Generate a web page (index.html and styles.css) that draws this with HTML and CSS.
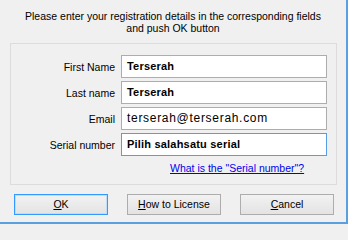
FILE: index.html
```html
<!DOCTYPE html>
<html>
<head>
<meta charset="utf-8">
<link rel="stylesheet" href="styles.css">
</head>
<body>
<div class="window">
  <div class="intro">Please enter your registration details in the corresponding fields<br>and push OK button</div>
  <div class="group">
    <div class="row">
      <label class="label">First Name</label>
      <div class="field">Terserah</div>
    </div>
    <div class="row">
      <label class="label">Last name</label>
      <div class="field">Terserah</div>
    </div>
    <div class="row">
      <label class="label">Email</label>
      <div class="field regular">terserah@terserah.com</div>
    </div>
    <div class="row">
      <label class="label">Serial number</label>
      <div class="field focused">Pilih salahsatu serial</div>
    </div>
    <div class="linkrow"><a class="link" href="#">What is the "Serial number"?</a></div>
  </div>
  <div class="buttons">
    <div class="btn default"><span class="u">O</span>K</div>
    <div class="btn"><span class="u">H</span>ow to License</div>
    <div class="btn"><span class="u">C</span>ancel</div>
  </div>
</div>
</body>
</html>
```
FILE: styles.css
```css
html, body {
  margin: 0;
  padding: 0;
}
body {
  width: 348px;
  height: 224px;
  background: #f0f0f0;
  font-family: "Liberation Sans", Arial, sans-serif;
  font-size: 10.5px;
  color: #000;
  overflow: hidden;
}
.window {
  box-sizing: border-box;
  width: 348px;
  height: 224px;
  border-right: 2px solid #5a9fe0;
  border-bottom: 2px solid #5a9fe0;
  padding-top: 10px;
}
.intro {
  text-align: center;
  line-height: 12px;
}
.group {
  box-sizing: border-box;
  margin: 9px 0 0 10px;
  width: 327px;
  height: 142px;
  border: 1px solid #dcdcdc;
  padding: 11px 8px 0 0;
  display: flex;
  flex-direction: column;
  gap: 3px;
}
.row {
  display: flex;
  align-items: center;
  gap: 6px;
  height: 23px;
}
.label {
  width: 104px;
  text-align: right;
  flex: none;
}
.field {
  box-sizing: border-box;
  width: 206px;
  height: 23px;
  background: #fff;
  border: 1px solid #adadad;
  padding: 0 0 0 5px;
  font-size: 11px;
  font-weight: bold;
  letter-spacing: 0.2px;
  line-height: 21px;
  white-space: pre;
}
.field.regular {
  font-size: 12px;
  font-weight: normal;
  letter-spacing: 0.7px;
}
.field.focused {
  border-color: #569de5;
}
.linkrow {
  padding: 3px 0 0 159px;
  line-height: 13px;
}
.link {
  color: #0000ee;
  text-decoration: underline;
}
.buttons {
  display: flex;
  gap: 19px;
  margin: 9px 0 0 14px;
}
.btn {
  box-sizing: border-box;
  width: 94px;
  height: 21px;
  border: 1px solid #adadad;
  background: linear-gradient(#f2f2f2, #e3e3e3);
  text-align: center;
  line-height: 19px;
}
.btn.default {
  border-color: #3399ff;
  box-shadow: inset 0 0 0 1px #bfdcf8;
}
.u {
  text-decoration: underline;
}
```
